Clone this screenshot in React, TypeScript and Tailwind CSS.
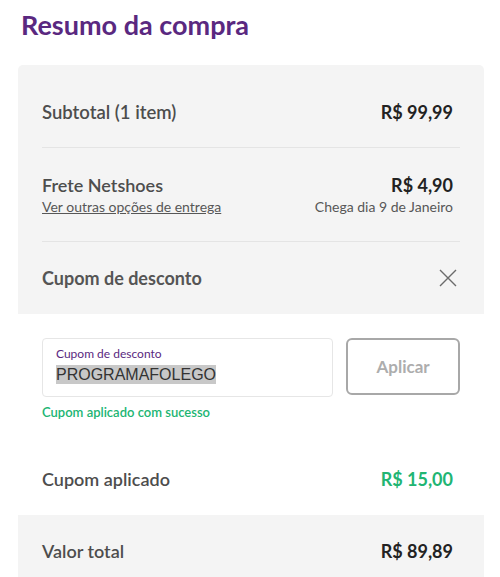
import React from "react";

export default function App() {
  const font = { fontFamily: "Lato, 'Noto Sans', sans-serif" };
  return (
    <div className="w-[500px] h-[577px] overflow-hidden bg-white" style={font}>
      <h1 className="pl-[21px] pt-[8px] h-[65px] text-[27px] font-bold text-[#5a2880] leading-[34px]">
        Resumo da compra
      </h1>
      <div className="mx-[18px] w-[466px] rounded-[5px] bg-[#f4f4f4] overflow-hidden">
        <div className="h-[82px] pl-6 pr-[31px] pt-[13px] flex items-center justify-between">
          <span className="text-[18.5px] text-[#4d4d4d] font-semibold">Subtotal (1 item)</span>
          <span className="text-[18px] text-[#222] font-bold">R$ 99,99</span>
        </div>
        <div className="mx-6 border-t border-[#e4e4e4]" />
        <div className="h-[93px] pl-6 pr-[31px] pt-[2px] flex items-center justify-between">
          <div className="flex flex-col">
            <span className="text-[18px] text-[#4d4d4d] font-semibold leading-[22px]">Frete Netshoes</span>
            <span className="text-[14px] text-[#575757] underline leading-[21px]">Ver outras opções de entrega</span>
          </div>
          <div className="flex flex-col items-end">
            <span className="text-[18px] text-[#222] font-bold leading-[22px]">R$ 4,90</span>
            <span className="text-[14px] text-[#575757] leading-[21px]">Chega dia 9 de Janeiro</span>
          </div>
        </div>
        <div className="mx-6 border-t border-[#e4e4e4]" />
        <div className="h-[72px] px-6 flex items-center justify-between">
          <span className="text-[18px] text-[#555] font-bold">Cupom de desconto</span>
          <svg width="18" height="18" viewBox="0 0 18 18" className="mr-[3px]">
            <path d="M1 1 L17 17 M17 1 L1 17" stroke="#6b6b6b" strokeWidth="1.4" fill="none" />
          </svg>
        </div>
        <div className="bg-white px-6 pt-6 h-[201px]">
          <div className="flex gap-[13px]">
            <div className="w-[292px] h-[59px] rounded-[4px] border border-[#e6e6e6] pl-[13px] pt-[7px]">
              <div className="text-[12px] text-[#5a2880] leading-[16px]">Cupom de desconto</div>
              <div className="mt-0">
                <span
                  className="bg-[#c8c8c8] text-[#333] text-[16px] leading-[19px] inline-block"
                  style={{ fontFamily: "'Liberation Sans', Arial, sans-serif" }}
                >
                  PROGRAMAFOLEGO
                </span>
              </div>
            </div>
            <button className="w-[114px] h-[57px] rounded-[6px] border-2 border-[#a8a8a8] text-[17px] font-bold text-[#adadad] bg-white">
              Aplicar
            </button>
          </div>
          <div className="mt-[6px] text-[13px] font-semibold text-[#21b573]">Cupom aplicado com sucesso</div>
          <div className="mt-[43px] pr-[7px] flex items-center justify-between">
            <span className="text-[18px] text-[#4d4d4d] font-semibold">Cupom aplicado</span>
            <span className="text-[18px] text-[#21b573] font-bold">R$ 15,00</span>
          </div>
        </div>
        <div className="h-[72px] pl-6 pr-[31px] flex items-center justify-between">
          <span className="text-[18px] text-[#4d4d4d] font-semibold">Valor total</span>
          <span className="text-[18px] text-[#222] font-bold">R$ 89,89</span>
        </div>
      </div>
    </div>
  );
}
